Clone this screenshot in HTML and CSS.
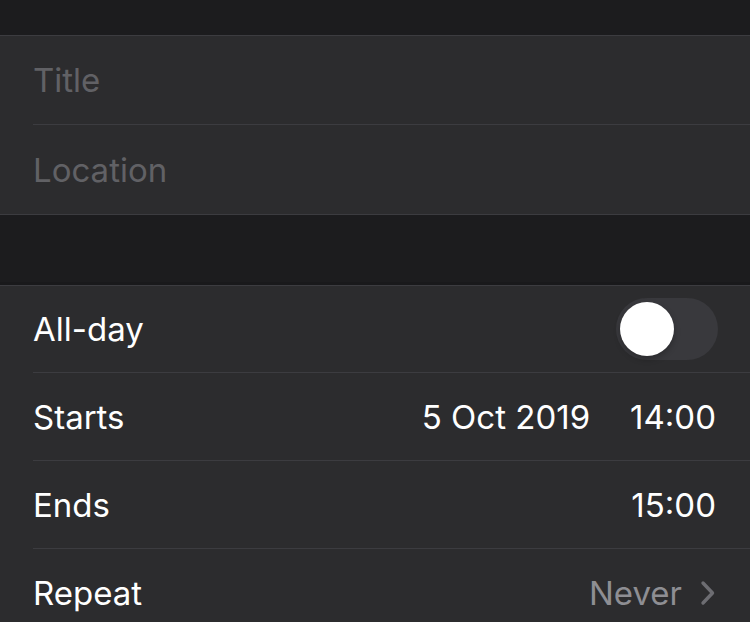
FILE: index.html
```html
<!DOCTYPE html>
<html lang="en">
<head>
<meta charset="utf-8">
<title>New Event</title>
<link rel="stylesheet" href="styles.css">
</head>
<body>
<div class="screen">
  <div class="band band-top"></div>
  <section class="group">
    <div class="row row-text"><span class="placeholder">Title</span></div>
    <div class="row row-text"><span class="placeholder">Location</span></div>
  </section>
  <div class="band band-gap"></div>
  <section class="group">
    <div class="row row-switch">
      <span class="label">All-day</span>
      <span class="switch"><span class="knob"></span></span>
    </div>
    <div class="row">
      <span class="label">Starts</span>
      <span class="value"><span class="date">5 Oct 2019</span><span class="time">14:00</span></span>
    </div>
    <div class="row">
      <span class="label">Ends</span>
      <span class="value"><span class="time">15:00</span></span>
    </div>
    <div class="row">
      <span class="label">Repeat</span>
      <span class="value detail">Never
        <svg class="chevron" width="16" height="26" viewBox="0 0 16 26"><path d="M3 3 L12.5 13 L3 23" fill="none" stroke="#6d6d72" stroke-width="3.4" stroke-linecap="round" stroke-linejoin="round"/></svg>
      </span>
    </div>
  </section>
</div>
</body>
</html>
```

FILE: styles.css
```css
* { box-sizing: border-box; }
html, body { margin: 0; padding: 0; }
body {
  background: #2c2c2e;
  font-family: Inter, "Open Sans", "Liberation Sans", sans-serif;
  color: #ffffff;
  width: 750px;
  height: 622px;
  overflow: hidden;
}
.screen { display: flex; flex-direction: column; }
.band { background: #1c1c1e; }
.band-top { height: 36px; border-bottom: 1px solid #3c3c40; }
.band-gap { height: 72px; border-top: 1px solid #3c3c40; border-bottom: 1px solid #3c3c40; box-shadow: inset 0 -3px 0 #19191b; }
.group { background: #2c2c2e; display: flex; flex-direction: column; }
.row {
  height: 88px;
  margin-left: 33px;
  padding-right: 34px;
  display: flex;
  align-items: center;
  justify-content: space-between;
  border-bottom: 1px solid #3c3c40;
  font-size: 33px;
}
.row-text { height: 89px; }
.row-switch { height: 87px; }
.row:last-child { border-bottom: none; }
.placeholder { color: #616165; }
.label { color: #ffffff; }
.value { display: flex; align-items: center; gap: 40px; color: #ffffff; }
.detail { color: #8e8e93; gap: 18px; }
.chevron { display: block; }
.switch {
  width: 102px; height: 62px; border-radius: 31px;
  background: #39393d;
  display: flex; align-items: center; padding-left: 4px;
  margin-right: -2px;
}
.knob {
  width: 54px; height: 54px; border-radius: 50%;
  background: #ffffff;
  box-shadow: 0 3px 6px rgba(0,0,0,0.25);
}
```
